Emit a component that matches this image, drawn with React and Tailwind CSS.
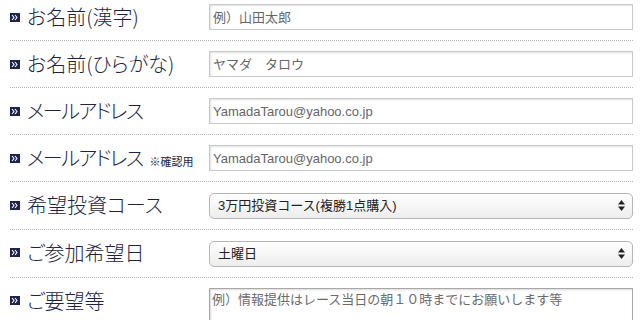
import { useState } from 'react';

const rows = [
  { label: 'お名前(漢字)', type: 'text', placeholder: '例）山田太郎' },
  { label: 'お名前(ひらがな)', type: 'text', placeholder: 'ヤマダ　タロウ' },
  { label: 'メールアドレス', tight: true, type: 'text', placeholder: 'YamadaTarou@yahoo.co.jp' },
  { label: 'メールアドレス', tight: true, note: '※確認用', type: 'text', placeholder: 'YamadaTarou@yahoo.co.jp' },
  { label: '希望投資コース', type: 'select', options: ['3万円投資コース(複勝1点購入)', '5万円投資コース(複勝2点購入)'] },
  { label: 'ご参加希望日', type: 'select', options: ['土曜日', '日曜日'] },
  { label: 'ご要望等', type: 'textarea', placeholder: '例）情報提供はレース当日の朝１０時までにお願いします等' },
];

function Marker() {
  return (
    <svg width="10" height="9" viewBox="0 0 10 9" className="shrink-0">
      <rect width="10" height="9" fill="#1c2350" />
      <polyline points="2,2 4,4.5 2,7" fill="none" stroke="#fff" strokeWidth="1.1" />
      <polyline points="5,2 7,4.5 5,7" fill="none" stroke="#fff" strokeWidth="1.1" />
    </svg>
  );
}

function Field({ row }) {
  const [value, setValue] = useState(row.options ? row.options[0] : '');
  const inputFont = { fontFamily: '"Liberation Sans", "Noto Sans CJK JP", sans-serif' };

  if (row.type === 'select') {
    return (
      <div className="relative w-[424px]">
        <select
          value={value}
          onChange={(e) => setValue(e.target.value)}
          style={inputFont}
          className="appearance-none w-full h-[26px] pl-[8px] pr-6 text-[13px] text-[#222] border border-[#b5b5b5] rounded-[5px] bg-gradient-to-b from-white to-[#ededed] focus:outline-none"
        >
          {row.options.map((o) => (
            <option key={o}>{o}</option>
          ))}
        </select>
        <svg width="7" height="11" viewBox="0 0 7 11" className="absolute right-[8px] top-[8px] pointer-events-none">
          <polygon points="3.5,0 7,4.5 0,4.5" fill="#222" />
          <polygon points="0,6.5 7,6.5 3.5,11" fill="#222" />
        </svg>
      </div>
    );
  }

  if (row.type === 'textarea') {
    return (
      <textarea
        rows="3"
        placeholder={row.placeholder}
        style={inputFont}
        className="w-[424px] h-[80px] px-[2px] py-[1px] text-[13px] border border-[#a8a8a8] shadow-[inset_1px_1px_2px_rgba(0,0,0,0.15)] placeholder:text-[#6b6b6b] resize-none focus:outline-none"
      ></textarea>
    );
  }

  return (
    <input
      type="text"
      placeholder={row.placeholder}
      style={inputFont}
      className="w-[424px] h-[26px] px-[3px] text-[13px] border border-[#c9c9c9] shadow-[inset_1px_1px_2px_rgba(0,0,0,0.12)] placeholder:text-[#666] focus:outline-none"
    />
  );
}

export default function App() {
  return (
    <div className="w-[640px] h-[320px] overflow-hidden bg-white">
      <div className="mt-[-6px] ml-[10px] w-[623px]">
        {rows.map((row, i) => (
          <div key={i} className="flex items-start py-[10px] border-b border-dotted border-[#b3b3b3]">
            <div className="w-[199px] h-[26px] flex items-center gap-[7px]">
              <Marker />
              <span
                className="text-[20px] leading-none font-light text-[#1b2340] whitespace-nowrap [font-feature-settings:'palt']"
                style={{ fontFamily: '"Noto Sans CJK JP", serif' }}
              >
                <span className={row.tight ? 'tracking-[-1.5px]' : ''}>{row.label}</span>
                {row.note && <span className="text-[11px] font-normal ml-[7px]">{row.note}</span>}
              </span>
            </div>
            <Field row={row} />
          </div>
        ))}
      </div>
    </div>
  );
}
